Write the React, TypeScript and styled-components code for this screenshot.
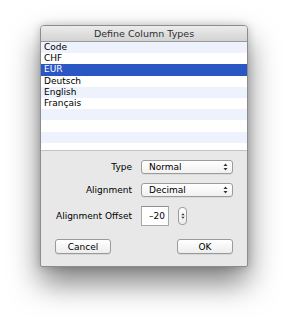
import React from "react";
import styled, { createGlobalStyle } from "styled-components";

const GlobalStyle = createGlobalStyle`
  html, body {
    margin: 0;
    padding: 0;
    background: #ffffff;
  }
  body {
    font-family: "DejaVu Sans", "Liberation Sans", sans-serif;
    font-size: 9px;
    color: #000;
  }
`;

const Page = styled.div`
  width: 289px;
  height: 323px;
  padding: 25px 0 0 40px;
  box-sizing: border-box;
  overflow: hidden;
`;

const Window = styled.div`
  width: 208px;
  display: flex;
  flex-direction: column;
  border: 1px solid #8c8c8c;
  border-radius: 4px 4px 2px 2px;
  box-sizing: border-box;
  overflow: hidden;
  background: #e8e8e8;
  box-shadow: 0 16px 30px rgba(0, 0, 0, 0.5), 0 0 8px rgba(0, 0, 0, 0.2);
`;

const TitleBar = styled.div`
  height: 15px;
  display: flex;
  align-items: center;
  justify-content: center;
  background: linear-gradient(#ececec, #d3d3d3);
  border-bottom: 1px solid #9a9a9a;
  color: #2e2e2e;
  font-size: 9.5px;
`;

const List = styled.div`
  height: 108px;
  overflow: hidden;
  background: #ffffff;
  border-bottom: 1px solid #c4c4c4;
`;

const Row = styled.div<{ $alt: boolean; $selected?: boolean }>`
  height: 11.2px;
  line-height: 11.2px;
  padding-left: 3px;
  background: ${(p) => (p.$selected ? "#2b57c5" : p.$alt ? "#edf2fd" : "#ffffff")};
  color: ${(p) => (p.$selected ? "#ffffff" : "#000")};
  white-space: nowrap;
`;

const Panel = styled.div`
  display: flex;
  flex-direction: column;
  padding: 9px 14px 12px 14px;
`;

const Form = styled.div`
  display: grid;
  grid-template-columns: 77px auto;
  column-gap: 9px;
  row-gap: 9px;
  align-items: center;
`;

const Label = styled.div`
  text-align: right;
  white-space: nowrap;
`;

const Popup = styled.div`
  width: 92px;
  height: 14px;
  box-sizing: border-box;
  display: flex;
  align-items: center;
  justify-content: space-between;
  padding: 0 4px 0 7px;
  border: 1px solid #9c9c9c;
  border-radius: 3px;
  background: linear-gradient(#ffffff, #f1f1f1);
  box-shadow: 0 1px 0 rgba(0, 0, 0, 0.06);
`;

const FieldRow = styled.div`
  display: flex;
  align-items: center;
  gap: 9px;
`;

const TextField = styled.div`
  width: 28px;
  height: 20px;
  box-sizing: border-box;
  border: 1px solid #a8a8a8;
  border-top-color: #8e8e8e;
  background: #ffffff;
  display: flex;
  align-items: center;
  justify-content: flex-end;
  padding-right: 3px;
`;

const Stepper = styled.div`
  width: 9px;
  height: 18px;
  box-sizing: border-box;
  border: 1px solid #9c9c9c;
  border-radius: 4px;
  background: linear-gradient(#ffffff, #ececec);
  display: flex;
  align-items: center;
  justify-content: center;
`;

const Buttons = styled.div`
  display: flex;
  justify-content: space-between;
  margin-top: 13px;
`;

const Button = styled.div`
  width: 56px;
  height: 15px;
  box-sizing: border-box;
  border: 1px solid #9a9a9a;
  border-radius: 3px;
  background: linear-gradient(#ffffff, #ededed);
  display: flex;
  align-items: center;
  justify-content: center;
  box-shadow: 0 1px 0 rgba(0, 0, 0, 0.07);
`;

const Arrows: React.FC<{ w?: number; h?: number }> = ({ w = 5, h = 8 }) => (
  <svg width={w} height={h} viewBox="0 0 5 8">
    <path d="M2.5 0.5 L4.5 3 L0.5 3 Z" fill="#333" />
    <path d="M2.5 7.5 L4.5 5 L0.5 5 Z" fill="#333" />
  </svg>
);

const items = ["Code", "CHF", "EUR", "Deutsch", "English", "Français", "", "", "", ""];

export default function App() {
  return (
    <>
      <GlobalStyle />
      <Page>
        <Window>
          <TitleBar>Define Column Types</TitleBar>
          <List>
            {items.map((item, i) => (
              <Row key={i} $alt={i % 2 === 0} $selected={item === "EUR"}>
                {item}
              </Row>
            ))}
          </List>
          <Panel>
            <Form>
              <Label>Type</Label>
              <Popup>
                <span>Normal</span>
                <Arrows />
              </Popup>
              <Label>Alignment</Label>
              <Popup>
                <span>Decimal</span>
                <Arrows />
              </Popup>
              <Label>Alignment Offset</Label>
              <FieldRow>
                <TextField>–20</TextField>
                <Stepper>
                  <Arrows w={4} h={8} />
                </Stepper>
              </FieldRow>
            </Form>
            <Buttons>
              <Button>Cancel</Button>
              <Button>OK</Button>
            </Buttons>
          </Panel>
        </Window>
      </Page>
    </>
  );
}
